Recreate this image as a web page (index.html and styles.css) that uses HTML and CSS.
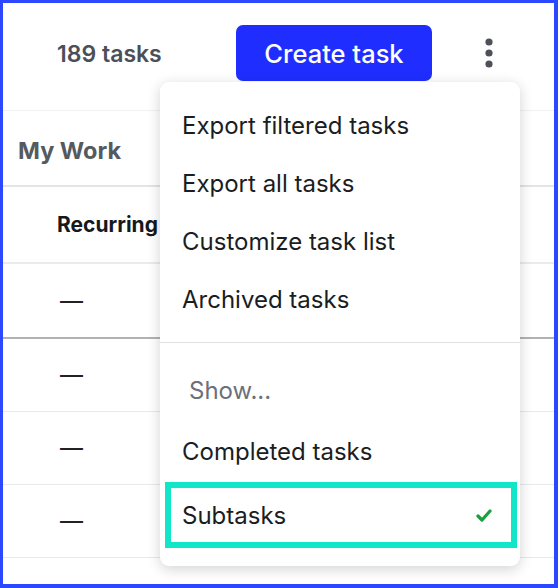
FILE: index.html
```html
<!DOCTYPE html>
<html lang="en">
<head>
    <meta charset="UTF-8">
    <meta name="viewport" content="width=device-width, initial-scale=1.0">
    <title>My Work</title>
    <link rel="stylesheet" href="styles.css">
</head>
<body>
    <div class="frame">
        <div class="topbar">
            <span class="count">189 tasks</span>
            <button class="create">Create task</button>
            <span class="kebab">
                <svg width="24" height="32" viewBox="0 0 24 32">
                    <circle cx="12" cy="5" r="3.6" fill="#4d5058"/>
                    <circle cx="12" cy="16" r="3.6" fill="#4d5058"/>
                    <circle cx="12" cy="27" r="3.6" fill="#4d5058"/>
                </svg>
            </span>
        </div>
        <div class="title">My Work</div>
        <div class="row head">Recurring</div>
        <div class="row first">—</div>
        <div class="row">—</div>
        <div class="row">—</div>
        <div class="row">—</div>
        <div class="row last"></div>

        <!-- menu do botão de opções -->
        <div class="menu">
            <div class="item">Export filtered tasks</div>
            <div class="item">Export all tasks</div>
            <div class="item">Customize task list</div>
            <div class="item">Archived tasks</div>
            <div class="divider"></div>
            <div class="item show">Show...</div>
            <div class="item completed">Completed tasks</div>
            <div class="item selected">
                <span>Subtasks</span>
                <svg width="16" height="13" viewBox="0 0 16 13">
                    <path d="M2 7 L6 11 L14 2" fill="none" stroke="#17a03c" stroke-width="3.2" stroke-linecap="round" stroke-linejoin="round"/>
                </svg>
            </div>
        </div>
    </div>
</body>
</html>
```

FILE: styles.css
```css
* {
    box-sizing: border-box;
}
body {
    margin: 0;
    font-family: Inter, "Noto Sans", sans-serif;
    background-color: white;
}
.frame {
    position: relative;
    width: 558px;
    height: 588px;
    border-style: solid;
    border-color: #2b47ff;
    border-width: 3px 4px 4px 3px;
    overflow: hidden;
    background-color: white;
}
.topbar {
    display: flex;
    align-items: flex-start;
    height: 108px;
    padding: 22px 0 0 54px;
    border-bottom: 1px solid #f1f1f1;
}
.count {
    width: 106px;
    margin-top: 15px;
    font-size: 23px;
    font-weight: 600;
    color: #4b5058;
    white-space: nowrap;
}
.create {
    margin-left: 73px;
    width: 196px;
    height: 56px;
    border: none;
    border-radius: 7px;
    background-color: #1f2eff;
    color: white;
    font-family: inherit;
    font-size: 25.5px;
    font-weight: 500;
}
.kebab {
    margin: 12px 0 0 45px;
}
.title {
    height: 76px;
    padding: 4px 0 0 15px;
    display: flex;
    align-items: center;
    font-size: 23.5px;
    font-weight: 700;
    color: #555a60;
    border-bottom: 2px solid #e4e4e4;
}
.row {
    height: 73px;
    display: flex;
    align-items: center;
    padding-left: 57px;
    font-size: 23px;
    color: #222;
    border-bottom: 1px solid #e9e9e9;
}
.row.head {
    height: 77px;
    padding-left: 54px;
    font-size: 21px;
    font-weight: 700;
    color: #15181d;
    border-bottom: 2px solid #ebebeb;
}
.row.first {
    height: 75px;
    border-bottom: 2px solid #b2b2b2;
}
.row.last {
    border-bottom: none;
}
.menu {
    position: absolute;
    left: 157px;
    top: 79px;
    width: 360px;
    padding: 14px 0 18px;
    background-color: white;
    border-radius: 9px;
    box-shadow: 0 3px 14px rgba(0, 0, 0, 0.18);
}
.item {
    height: 58px;
    display: flex;
    align-items: center;
    padding-left: 22px;
    font-size: 24px;
    color: #1a1d21;
}
.divider {
    margin-top: 14px;
    border-top: 1px solid #e2e2e2;
}
.item.show {
    margin-top: 18px;
    padding-left: 29px;
    color: #6b7079;
}
.item.completed {
    margin-top: 3px;
}
.item.selected {
    height: 66px;
    margin: 2px 3px 0 5px;
    padding: 0 19px 0 11px;
    border: 6px solid #12e6c8;
    justify-content: space-between;
}
```
